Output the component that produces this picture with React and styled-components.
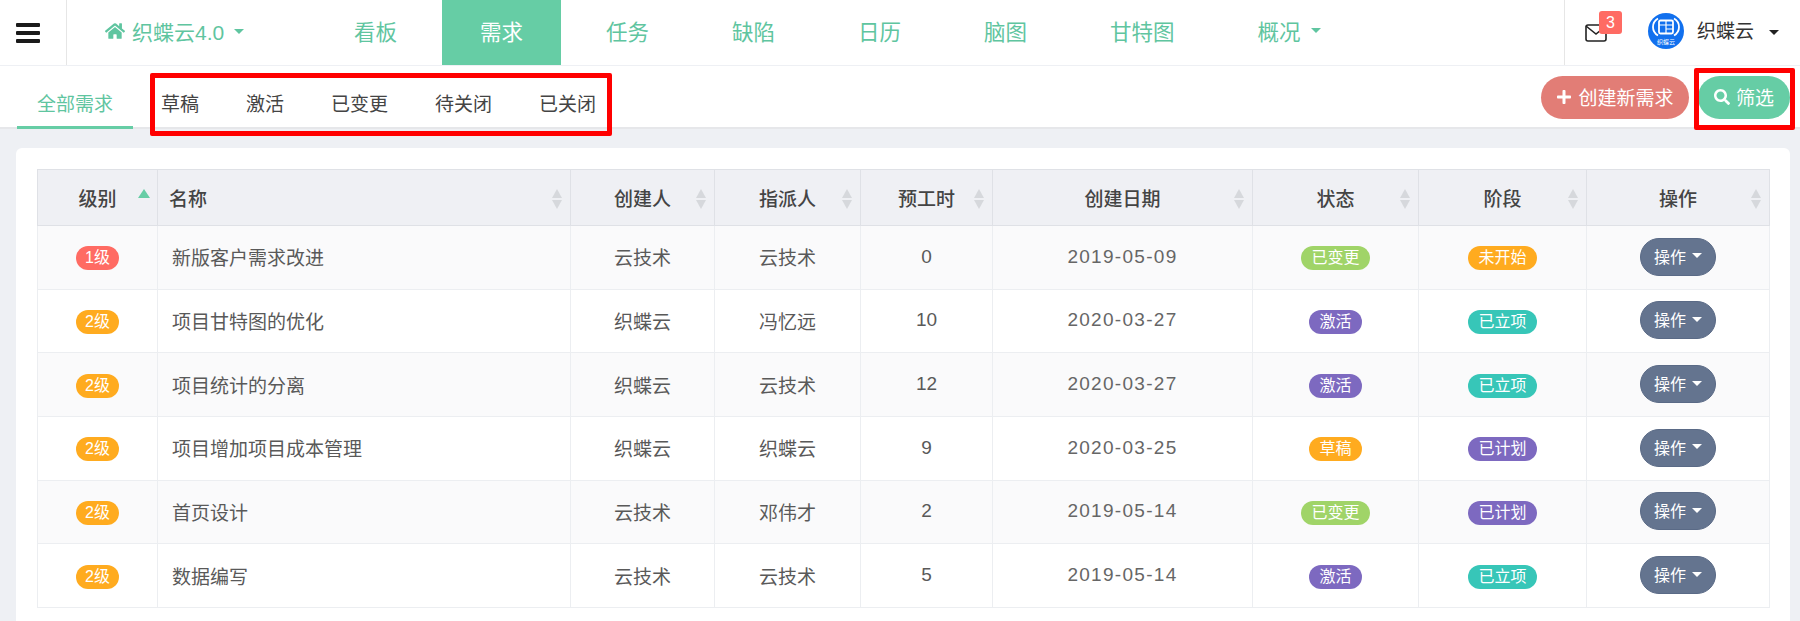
import React from 'react';
import styled, { createGlobalStyle } from 'styled-components';
import { FaHome, FaPlus, FaSearch } from 'react-icons/fa';

const GlobalStyle = createGlobalStyle`
  html, body {
    margin: 0;
    height: 100%;
    overflow: hidden;
    background: #eef0f4;
    font-family: "Liberation Sans", "Noto Sans CJK SC", sans-serif;
  }
  * { box-sizing: border-box; }
`;

const GREEN = '#66cda5';

const Page = styled.div`
  width: 1800px;
  height: 621px;
  overflow: hidden;
  background: #eef0f4;
`;

const Navbar = styled.header`
  height: 65px;
  display: flex;
  background: #fff;
  margin-bottom: 1px;
`;

const MenuCell = styled.div`
  width: 67px;
  display: flex;
  flex-direction: column;
  justify-content: center;
  gap: 4px;
  padding-left: 16px;
  border-right: 1px solid #e6e6e6;
`;

const MenuBar = styled.span`
  display: block;
  width: 24px;
  height: 4px;
  border-radius: 1px;
  background: #1a1a1a;
`;

const Brand = styled.div`
  width: 249px;
  padding: 0 0 3px 38px;
  display: flex;
  align-items: center;
  color: #5fc5a0;
  font-size: 21px;
`;

const BrandName = styled.span`
  margin-left: 7px;
`;

const Caret = styled.i`
  display: inline-block;
  width: 0;
  height: 0;
  margin-left: ${p => p.$gap ?? 10}px;
  border-left: 5.500px solid transparent;
  border-right: 5.500px solid transparent;
  border-top: 5.500px solid ${p => p.$color || 'currentColor'};
`;

const NavList = styled.nav`
  display: flex;
  gap: 7px;
`;

const NavItem = styled.a`
  display: flex;
  align-items: center;
  justify-content: center;
  padding: 0 38px 5px;
  min-width: 119px;
  font-size: 21.500px;
  color: ${p => (p.$active ? '#fff' : '#5fc5a0')};
  background: ${p => (p.$active ? GREEN : 'transparent')};
`;

const UserArea = styled.div`
  margin-left: auto;
  width: 236px;
  border-left: 1px solid #e6e6e6;
  padding-left: 20px;
  display: flex;
  align-items: center;
`;

const MailWrap = styled.div`
  position: relative;
  width: 22px;
  height: 18px;
  margin-top: 1px;
  margin-right: 41px;
`;

const Badge = styled.span`
  position: absolute;
  left: 14px;
  top: -13px;
  width: 23px;
  height: 23px;
  border-radius: 3px;
  background: #ff6b63;
  color: #fff;
  font-size: 16px;
  line-height: 23px;
  text-align: center;
`;

const LogoBox = styled.div`
  width: 36px;
  height: 36px;
  margin-top: -3px;
`;

const UserName = styled.span`
  margin-left: 13px;
  margin-top: -7px;
  font-size: 19px;
  color: #333;
`;

const SubBar = styled.div`
  height: 63px;
  display: flex;
  align-items: stretch;
  background: #fff;
  border-bottom: 2px solid #e6e7ea;
  position: relative;
`;

const Tabs = styled.div`
  display: flex;
  padding-left: 17px;
`;

const Tab = styled.a`
  height: 63px;
  display: flex;
  align-items: center;
  padding: ${p => (p.$active ? 12 : 13)}px ${p => (p.$active ? 20 : 23.500)}px 0;
  margin-right: ${p => (p.$active ? 4.500 : 0)}px;
  font-size: 19px;
  color: ${p => (p.$active ? '#5fc5a0' : '#444')};
  border-bottom: 3px solid ${p => (p.$active ? GREEN : 'transparent')};
`;

const Actions = styled.div`
  margin-left: auto;
  padding: 10px 10px 0 0;
  display: flex;
  gap: 9px;
`;

const PillButton = styled.button`
  height: 43px;
  padding: 0 ${p => p.$pad}px 2px;
  display: flex;
  align-items: center;
  gap: 6px;
  border: none;
  border-radius: 22px;
  background: ${p => p.$bg};
  color: #fff;
  font-family: inherit;
  font-size: 19px;
`;

const Highlight = styled.div`
  position: absolute;
  left: ${p => p.$x}px;
  top: ${p => p.$y}px;
  width: ${p => p.$w}px;
  height: ${p => p.$h}px;
  border: 5px solid #f00;
  border-radius: 2px;
  pointer-events: none;
`;

const Card = styled.main`
  margin: 19px 10px 0 16px;
  padding: 21px 21px 30px;
  background: #fff;
  border-radius: 6px;
`;

const Table = styled.table`
  width: 1732px;
  table-layout: fixed;
  border-collapse: collapse;
`;

const HeadCell = styled.th`
  position: relative;
  height: 56px;
  padding: 0 ${p => (p.$left ? '11px' : '0')};
  border: 1px solid #dfe1e6;
  background: #eff0f4;
  color: #444;
  font-size: 19px;
  font-weight: 500;
  text-align: ${p => (p.$left ? 'left' : 'center')};
`;

const SortIcon = styled.svg`
  position: absolute;
  right: 7px;
  top: 19px;
  width: 12px;
  height: 20px;
`;

const Row = styled.tr`
  height: 63.670px;
  background: ${p => (p.$odd ? '#fafafb' : '#fff')};
`;

const Cell = styled.td`
  padding: 0 ${p => (p.$left ? '14px' : '0')} 1px;
  border: 1px solid #eceef1;
  color: ${p => (p.$date ? '#666' : '#595959')};
  font-size: 19px;
  letter-spacing: ${p => (p.$date ? '1.300px' : 'normal')};
  text-align: ${p => (p.$left ? 'left' : 'center')};
`;

const Tag = styled.span`
  display: inline-block;
  height: 24px;
  margin-top: 3px;
  padding: 0 ${p => p.$pad ?? 10}px;
  border-radius: 12px;
  background: ${p => p.$bg};
  color: #fff;
  font-size: 16px;
  line-height: 24px;
  vertical-align: middle;
`;

const OpButton = styled.button`
  width: 76px;
  height: 38px;
  padding: 0 0 2px;
  display: inline-flex;
  align-items: center;
  justify-content: center;
  vertical-align: middle;
  border: 1px solid #5a6a86;
  border-radius: 19px;
  background: #64748f;
  color: #fff;
  font-family: inherit;
  font-size: 16px;
`;

const MailIcon = () => (
  <svg width="22" height="18" viewBox="0 0 22 18" fill="none" stroke="#222" strokeWidth="1.600">
    <rect x="1" y="1" width="20" height="16" rx="2" />
    <path d="M1 2l10 8 10-8" />
  </svg>
);

const LogoMark = () => (
  <svg width="36" height="36" viewBox="0 0 36 36">
    <circle cx="18" cy="18" r="18" fill="#1170ee" />
    <g fill="none" stroke="#fff">
      <path d="M10 5.500c-3.500 2-5 5-5 8.500s1.500 6.500 5 8.500" strokeWidth="1.800" />
      <path d="M26 5.500c3.500 2 5 5 5 8.500s-1.500 6.500-5 8.500" strokeWidth="1.800" />
      <rect x="11" y="7.500" width="14" height="13" rx="1.500" strokeWidth="1.800" />
      <path d="M18 7.500v13M18 12h7M18 16h7M11 12h7" strokeWidth="1.200" />
    </g>
    <text x="18" y="31" textAnchor="middle" fontSize="6" fill="#fff" fontFamily="Noto Sans CJK SC, sans-serif">织蝶云</text>
  </svg>
);

const SortArrows = ({ active }) => (
  <SortIcon viewBox="0 0 12 20">
    <path d={active ? 'M6 0l6 9H0z' : 'M6 0l5 9H1z'} fill={active ? GREEN : '#d6d8dc'} />
    {!active && <path d="M6 20l-5-9h10z" fill="#d6d8dc" />}
  </SortIcon>
);

const columns = [
  { title: '级别', width: 120 },
  { title: '名称', width: 413, left: true },
  { title: '创建人', width: 144 },
  { title: '指派人', width: 146 },
  { title: '预工时', width: 132 },
  { title: '创建日期', width: 260 },
  { title: '状态', width: 166 },
  { title: '阶段', width: 168 },
  { title: '操作', width: 183 },
];

const TAG_COLORS = {
  red: '#ff6b63',
  orange: '#ffab1f',
  lime: '#a0d468',
  purple: '#7d69c0',
  teal: '#37c6b8',
};

const rows = [
  ['1级', 'red', '新版客户需求改进', '云技术', '云技术', '0', '2019-05-09', '已变更', 'lime', '未开始', 'orange'],
  ['2级', 'orange', '项目甘特图的优化', '织蝶云', '冯忆远', '10', '2020-03-27', '激活', 'purple', '已立项', 'teal'],
  ['2级', 'orange', '项目统计的分离', '织蝶云', '云技术', '12', '2020-03-27', '激活', 'purple', '已立项', 'teal'],
  ['2级', 'orange', '项目增加项目成本管理', '织蝶云', '织蝶云', '9', '2020-03-25', '草稿', 'orange', '已计划', 'purple'],
  ['2级', 'orange', '首页设计', '云技术', '邓伟才', '2', '2019-05-14', '已变更', 'lime', '已计划', 'purple'],
  ['2级', 'orange', '数据编写', '云技术', '云技术', '5', '2019-05-14', '激活', 'purple', '已立项', 'teal'],
];

const navItems = ['看板', '需求', '任务', '缺陷', '日历', '脑图', '甘特图'];
const tabs = ['草稿', '激活', '已变更', '待关闭', '已关闭'];

export default function App() {
  return (
    <Page>
      <GlobalStyle />
      <Navbar>
        <MenuCell>
          <MenuBar />
          <MenuBar />
          <MenuBar />
        </MenuCell>
        <Brand>
          <FaHome size={20} />
          <BrandName>织蝶云4.0</BrandName>
          <Caret />
        </Brand>
        <NavList>
          {navItems.map(item => (
            <NavItem key={item} $active={item === '需求'}>{item}</NavItem>
          ))}
          <NavItem>概况<Caret /></NavItem>
        </NavList>
        <UserArea>
          <MailWrap>
            <MailIcon />
            <Badge>3</Badge>
          </MailWrap>
          <LogoBox><LogoMark /></LogoBox>
          <UserName>织蝶云</UserName>
          <Caret $gap={15} $color="#222" />
        </UserArea>
      </Navbar>

      <SubBar>
        <Tabs>
          <Tab $active>全部需求</Tab>
          {tabs.map(tab => <Tab key={tab}>{tab}</Tab>)}
        </Tabs>
        <Actions>
          <PillButton $bg="#e27d76" $pad={15.500}><FaPlus size={16} />创建新需求</PillButton>
          <PillButton $bg={GREEN} $pad={16}><FaSearch size={16} />筛选</PillButton>
        </Actions>
        <Highlight $x={150} $y={7} $w={462} $h={63} />
        <Highlight $x={1694} $y={2} $w={101} $h={62} />
      </SubBar>

      <Card>
        <Table>
          <colgroup>
            {columns.map(col => <col key={col.title} style={{ width: col.width }} />)}
          </colgroup>
          <thead>
            <tr>
              {columns.map((col, i) => (
                <HeadCell key={col.title} $left={col.left}>
                  {col.title}
                  <SortArrows active={i === 0} />
                </HeadCell>
              ))}
            </tr>
          </thead>
          <tbody>
            {rows.map((r, i) => (
              <Row key={r[2]} $odd={i % 2 === 0}>
                <Cell><Tag $pad={9} $bg={TAG_COLORS[r[1]]}>{r[0]}</Tag></Cell>
                <Cell $left>{r[2]}</Cell>
                <Cell>{r[3]}</Cell>
                <Cell>{r[4]}</Cell>
                <Cell>{r[5]}</Cell>
                <Cell $date>{r[6]}</Cell>
                <Cell><Tag $bg={TAG_COLORS[r[8]]}>{r[7]}</Tag></Cell>
                <Cell><Tag $bg={TAG_COLORS[r[10]]}>{r[9]}</Tag></Cell>
                <Cell><OpButton>操作<Caret $gap={6} /></OpButton></Cell>
              </Row>
            ))}
          </tbody>
        </Table>
      </Card>
    </Page>
  );
}
